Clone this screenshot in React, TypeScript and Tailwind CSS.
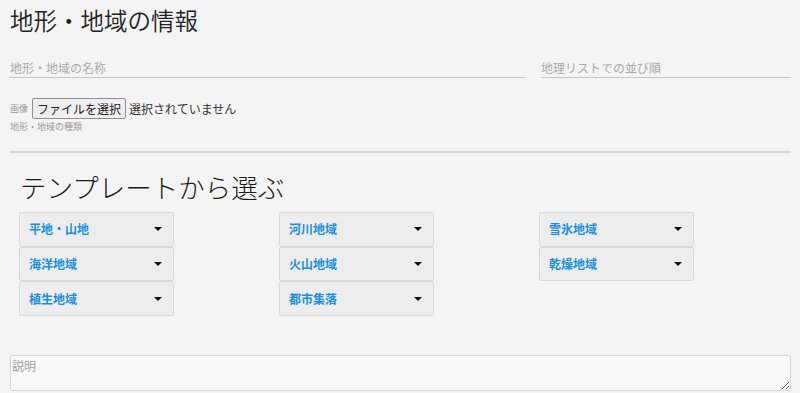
const columns: string[][] = [
    ["平地・山地", "海洋地域", "植生地域"],
    ["河川地域", "火山地域", "都市集落"],
    ["雪氷地域", "乾燥地域"],
];

function TemplateButton({ label }: { label: string }) {
    return (
        <button className="flex h-[34.7px] w-[155px] items-center justify-between rounded-[2px] border border-[#d9d9d9] bg-[#ededed] pl-[9px] pr-[11px] text-left">
            <span className="text-[12px] font-bold text-[#1b8fdf]">{label}</span>
            <span className="h-0 w-0 border-x-[4px] border-t-[4px] border-x-transparent border-t-[#111]" />
        </button>
    );
}

export default function App() {
    return (
        <div className="min-h-screen w-full overflow-hidden bg-[#f4f4f4] pl-[10px] pr-[9px] font-['Noto_Sans_CJK_JP','Noto_Sans',sans-serif] text-[#222]">
            <h1 className="pt-[4px] text-[23.5px] font-[350] leading-[32px] text-[#222]">地形・地域の情報</h1>

            <div className="mt-[22px] flex gap-[16px]">
                <input
                    placeholder="地形・地域の名称"
                    className="h-[20px] w-[515px] border-b border-[#c6c6c6] bg-transparent text-[12px] outline-none placeholder:text-[#aaa]"
                />
                <input
                    placeholder="地理リストでの並び順"
                    className="h-[20px] w-[250px] border-b border-[#c6c6c6] bg-transparent text-[12px] outline-none placeholder:text-[#aaa]"
                />
            </div>

            <div className="mt-[20px] flex items-center">
                <span className="text-[9px] text-[#9a9a9a]">画像</span>
                <button className="ml-[4px] flex h-[21px] w-[94px] items-center justify-center rounded-[2px] border border-[#8f8f8f] bg-[#efefef] text-[12px] text-[#222]">
                    ファイルを選択
                </button>
                <span className="ml-[3px] text-[12px] text-[#333]">選択されていません</span>
            </div>
            <div className="mt-[2px] text-[9px] leading-[12px] text-[#9a9a9a]">地形・地域の種類</div>

            <div className="mt-[18px] border-t-2 border-[#d6d6d6]" />

            <h2 className="ml-[10px] mt-[16px] text-[26.5px] font-light leading-[36px] text-[#1a1a1a]">テンプレートから選ぶ</h2>

            <div className="ml-[9px] mt-[7px] flex">
                {columns.map((col, i) => (
                    <div key={i} className="flex w-[260px] shrink-0 flex-col">
                        {col.map((label) => (
                            <TemplateButton key={label} label={label} />
                        ))}
                    </div>
                ))}
            </div>

            <textarea
                placeholder="説明"
                className="mt-[39px] block h-[36px] w-[781px] rounded-[2px] border border-[#d6d6d6] bg-[#f9f9f9] px-[1px] py-[1px] text-[12px] outline-none placeholder:text-[#a0a0a0]"
            />
        </div>
    );
}
